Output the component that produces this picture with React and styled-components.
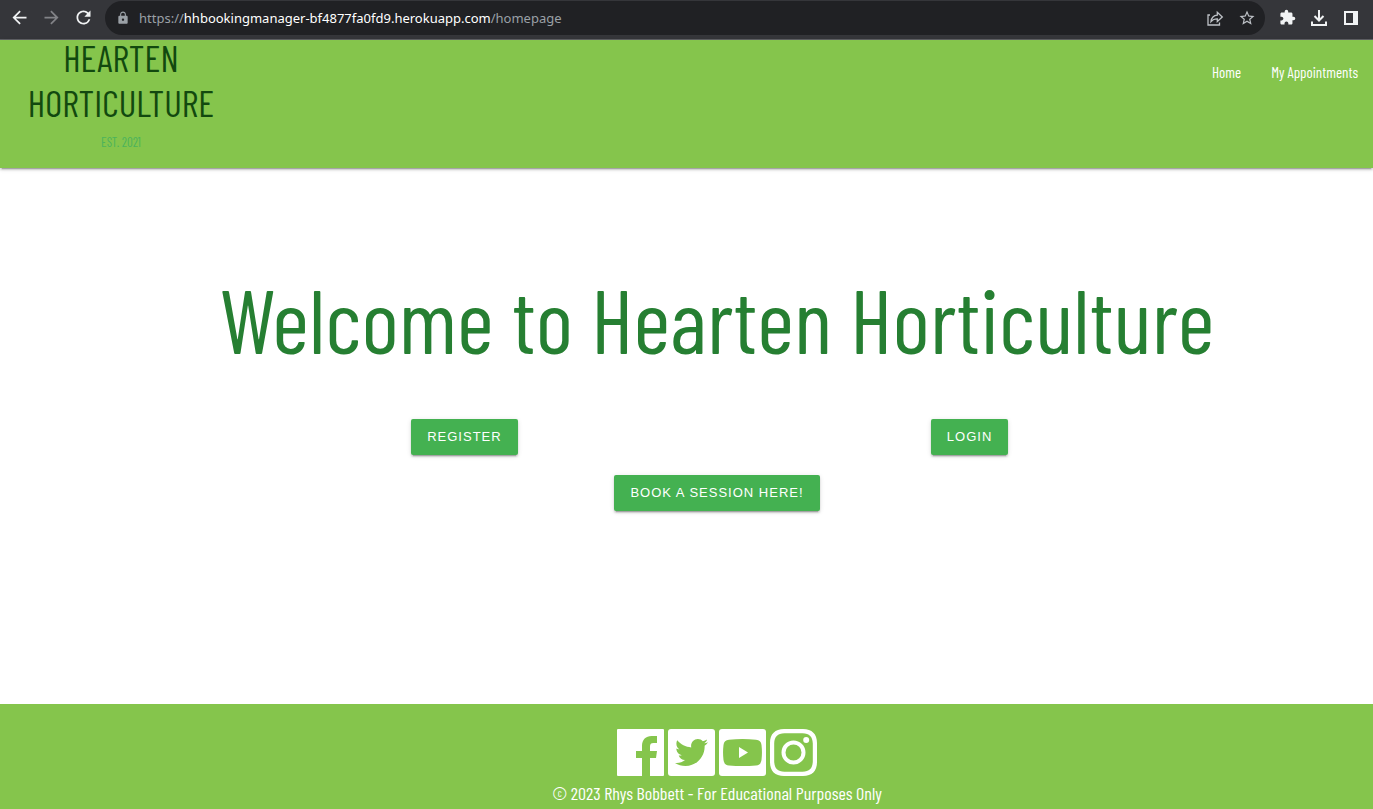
import React from "react";
import styled, { createGlobalStyle } from "styled-components";
import {
  MdArrowBack,
  MdArrowForward,
  MdRefresh,
  MdLock,
  MdStarBorder,
  MdExtension,
} from "react-icons/md";

const colors = {
  leaf: "#85c54c",
  forest: "#267f32",
  pine: "#12490f",
  button: "#44b151",
};

const condensed =
  '"Barlow Condensed", "Liberation Sans Narrow", "Roboto Condensed", "Liberation Sans", sans-serif';

const GlobalStyle = createGlobalStyle`
  *, *::before, *::after { box-sizing: border-box; }
  body {
    margin: 0;
    background: #fff;
    font-family: ${condensed};
  }
`;

const Page = styled.div`
  display: flex;
  flex-direction: column;
  min-height: 100vh;
`;

const BrowserBar = styled.div`
  display: flex;
  align-items: center;
  height: 40px;
  padding: 0 11px 4px 8px;
  background: #35363a;
  border-bottom: 1px solid #5f6165;
  overflow: hidden;
`;

const BarGroup = styled.div`
  display: flex;
  align-items: center;
  gap: 10px;
`;

const BarButton = styled.button`
  display: flex;
  align-items: center;
  justify-content: center;
  width: 22px;
  height: 22px;
  padding: 0;
  border: 0;
  background: none;
  color: ${(p) => p.$color || "#f1f3f4"};
`;

const AddressBar = styled.div`
  display: flex;
  flex: 1;
  align-items: center;
  height: 34px;
  margin: 0 11px;
  padding: 0 7px 0 11px;
  border-radius: 17px;
  background: #202124;
`;

const Address = styled.div`
  flex: 1;
  margin-left: 9px;
  color: #9aa0a6;
  font: 13px/20px "Noto Sans", "Open Sans", sans-serif;
  white-space: nowrap;
`;

const Host = styled.span`
  color: #fff;
`;

const Header = styled.header`
  display: flex;
  justify-content: space-between;
  height: 128px;
  background: ${colors.leaf};
  box-shadow: 0 2px 2px 0 rgba(0, 0, 0, 0.14), 0 1px 5px 0 rgba(0, 0, 0, 0.12),
    0 3px 1px -2px rgba(0, 0, 0, 0.2);
`;

const Brand = styled.a`
  display: flex;
  flex-direction: column;
  align-items: center;
  width: 242px;
  color: ${colors.pine};
  font-size: 37px;
  line-height: 45px;
  text-decoration: none;
  white-space: nowrap;
`;

const BrandLine = styled.span`
  margin-top: ${(p) => (p.$first ? -5 : 0)}px;
`;

const Established = styled.small`
  margin-top: 7px;
  color: #4cb35c;
  font-size: 13px;
  line-height: 20px;
`;

const Nav = styled.nav`
  display: flex;
`;

const NavLink = styled.a`
  padding: 0 15px;
  color: #fff;
  font-size: 15px;
  line-height: 64px;
  text-decoration: none;
`;

const Main = styled.main`
  flex: 1;
  padding: 90px 0 96px 61px;
`;

const Container = styled.div`
  width: 77%;
  margin: 0 auto;
`;

const Title = styled.h1`
  margin: 0 0 41px;
  color: ${colors.forest};
  font-size: 90px;
  font-weight: 400;
  line-height: 120px;
  text-align: center;
  white-space: nowrap;
`;

const Actions = styled.div`
  display: grid;
  grid-template-columns: 1fr 1fr;
  justify-items: center;
  row-gap: 20px;
`;

const ActionButton = styled.button`
  grid-column: ${(p) => (p.$wide ? "1 / -1" : "auto")};
  height: 36px;
  padding: 0 16px;
  border: 0;
  border-radius: 2px;
  background: ${colors.button};
  box-shadow: 0 2px 2px 0 rgba(0, 0, 0, 0.14), 0 1px 5px 0 rgba(0, 0, 0, 0.12),
    0 3px 1px -2px rgba(0, 0, 0, 0.2);
  color: #fff;
  font: 13px/36px "Liberation Sans", Arial, sans-serif;
  letter-spacing: 1px;
  text-transform: uppercase;
`;

const Footer = styled.footer`
  display: flex;
  flex-direction: column;
  align-items: center;
  height: 105px;
  padding: 25px 0 0 61px;
  background: ${colors.leaf};
  color: #fff;
`;

const Socials = styled.div`
  display: flex;
  gap: 4px;
`;

const SocialLink = styled.a`
  display: block;
  height: 47px;
  color: #fff;
`;

const Copyright = styled.p`
  margin: 5px 0 0;
  font-size: 18px;
  line-height: 24px;
`;

const Glyph = ({ size = 47, children }) => (
  <svg
    width={size}
    height={size}
    viewBox={`0 0 ${size} ${size}`}
    fill="currentColor"
    aria-hidden="true"
  >
    {children}
  </svg>
);

const FacebookIcon = () => (
  <Glyph>
    <rect width="47" height="47" rx="1" />
    <path
      fill={colors.leaf}
      d="M25 47V29h-6v-7h6v-5c0-6.500 4-10 9.500-10H40v7h-3.500C34 14 33 15 33 17.500V22h7l-1 7h-6v18z"
    />
  </Glyph>
);

const TwitterIcon = () => (
  <Glyph>
    <rect width="47" height="47" rx="3" />
    <path
      fill={colors.leaf}
      transform="translate(7 7) scale(.0645)"
      d="M459.37 151.716c.325 4.548.325 9.097.325 13.645 0 138.72-105.583 298.558-298.558 298.558-59.452 0-114.68-17.219-161.137-47.106 8.447.974 16.568 1.299 25.34 1.299 49.055 0 94.213-16.568 130.274-44.832-46.132-.975-84.792-31.188-98.112-72.772 6.498.974 12.995 1.624 19.818 1.624 9.421 0 18.843-1.3 27.614-3.573-48.081-9.747-84.143-51.98-84.143-102.985v-1.299c13.969 7.797 30.214 12.67 47.431 13.319-28.264-18.843-46.781-51.005-46.781-87.391 0-19.492 5.197-37.36 14.294-52.954 51.655 63.675 129.3 105.258 216.365 109.807-1.624-7.797-2.599-15.918-2.599-24.04 0-57.828 46.782-104.934 104.934-104.934 30.213 0 57.502 12.67 76.67 33.137 23.715-4.548 46.456-13.32 66.599-25.34-7.798 24.366-24.366 44.833-46.132 57.827 21.117-2.273 41.584-8.122 60.426-16.243-14.292 20.791-32.161 39.308-52.628 54.253z"
    />
  </Glyph>
);

const YoutubeIcon = () => (
  <Glyph>
    <rect width="47" height="47" rx="3" />
    <path
      fill={colors.leaf}
      d="M10 10.700Q23.500 9.400 37 10.700Q42 11 42.500 16Q43.400 23.500 42.500 31Q42 36 37 36.500Q23.500 37.500 10 36.500Q5 36 4.500 31Q3.600 23.500 4.500 16Q5 11 10 10.700z"
    />
    <path d="M20 18l9 5.500-9 5.500z" />
  </Glyph>
);

const InstagramIcon = () => (
  <Glyph>
    <path
      fillRule="evenodd"
      d="M14 0h19c9 0 14 5 14 14v19c0 9-5 14-14 14H14C5 47 0 42 0 33V14C0 5 5 0 14 0zM14.500 4.200C7.500 4.500 4.500 7.500 4.200 14.500v18c.3 7 3.300 10 10.300 10.300h18c7-.3 10-3.300 10.300-10.300v-18c-.3-7-3.300-10-10.300-10.300z"
    />
    <circle cx="23.500" cy="23.500" r="10" fill="none" stroke="currentColor" strokeWidth="4" />
    <circle cx="36.200" cy="11" r="3" />
  </Glyph>
);

const ShareIcon = () => (
  <Glyph size={18}>
    <path
      d="M4 6H2v10h11.500v-2.500M5 12.500c.5-4 2.700-6 6.300-6.300V3.300l5 4.700-5 4.500V9.800c-2.700 0-4.700.8-6.300 2.700z"
      fill="none"
      stroke="currentColor"
      strokeWidth="1.300"
    />
  </Glyph>
);

const DownloadIcon = () => (
  <Glyph size={18}>
    <path
      d="M9 1v10M4.500 7L9 11.500 13.500 7M2 12.500V16h14v-3.500"
      fill="none"
      stroke="currentColor"
      strokeWidth="2"
    />
  </Glyph>
);

const SidePanelIcon = () => (
  <Glyph size={18}>
    <path fillRule="evenodd" d="M2 2h14v14H2zM4 4v10h7V4z" />
  </Glyph>
);

const socials = [
  ["Facebook", FacebookIcon],
  ["Twitter", TwitterIcon],
  ["YouTube", YoutubeIcon],
  ["Instagram", InstagramIcon],
];

export default function App() {
  return (
    <Page>
      <GlobalStyle />
      <BrowserBar>
        <BarGroup>
          <BarButton aria-label="Back">
            <MdArrowBack size={21} />
          </BarButton>
          <BarButton aria-label="Forward" $color="#828387">
            <MdArrowForward size={21} />
          </BarButton>
          <BarButton aria-label="Reload">
            <MdRefresh size={21} />
          </BarButton>
        </BarGroup>
        <AddressBar>
          <MdLock size={14} color="#9aa0a6" />
          <Address role="textbox" aria-label="Address">
            https://<Host>hhbookingmanager-bf4877fa0fd9.herokuapp.com</Host>/homepage
          </Address>
          <BarGroup>
            <BarButton aria-label="Share" $color="#bdc1c6">
              <ShareIcon />
            </BarButton>
            <BarButton aria-label="Bookmark" $color="#bdc1c6">
              <MdStarBorder size={18} />
            </BarButton>
          </BarGroup>
        </AddressBar>
        <BarGroup>
          <BarButton aria-label="Extensions">
            <MdExtension size={17} />
          </BarButton>
          <BarButton aria-label="Downloads">
            <DownloadIcon />
          </BarButton>
          <BarButton aria-label="Side panel">
            <SidePanelIcon />
          </BarButton>
        </BarGroup>
      </BrowserBar>

      <Header>
        <Brand href="#home">
          <BrandLine $first>HEARTEN</BrandLine>
          <BrandLine>HORTICULTURE</BrandLine>
          <Established>EST. 2021</Established>
        </Brand>
        <Nav>
          <NavLink href="#home">Home</NavLink>
          <NavLink href="#appointments">My Appointments</NavLink>
        </Nav>
      </Header>

      <Main>
        <Container>
          <Title>Welcome to Hearten Horticulture</Title>
          <Actions>
            <ActionButton>Register</ActionButton>
            <ActionButton>Login</ActionButton>
            <ActionButton $wide>Book a session here!</ActionButton>
          </Actions>
        </Container>
      </Main>

      <Footer>
        <Socials>
          {socials.map(([name, Icon]) => (
            <SocialLink key={name} href={`#${name.toLowerCase()}`} aria-label={name}>
              <Icon />
            </SocialLink>
          ))}
        </Socials>
        <Copyright>© 2023 Rhys Bobbett - For Educational Purposes Only</Copyright>
      </Footer>
    </Page>
  );
}
